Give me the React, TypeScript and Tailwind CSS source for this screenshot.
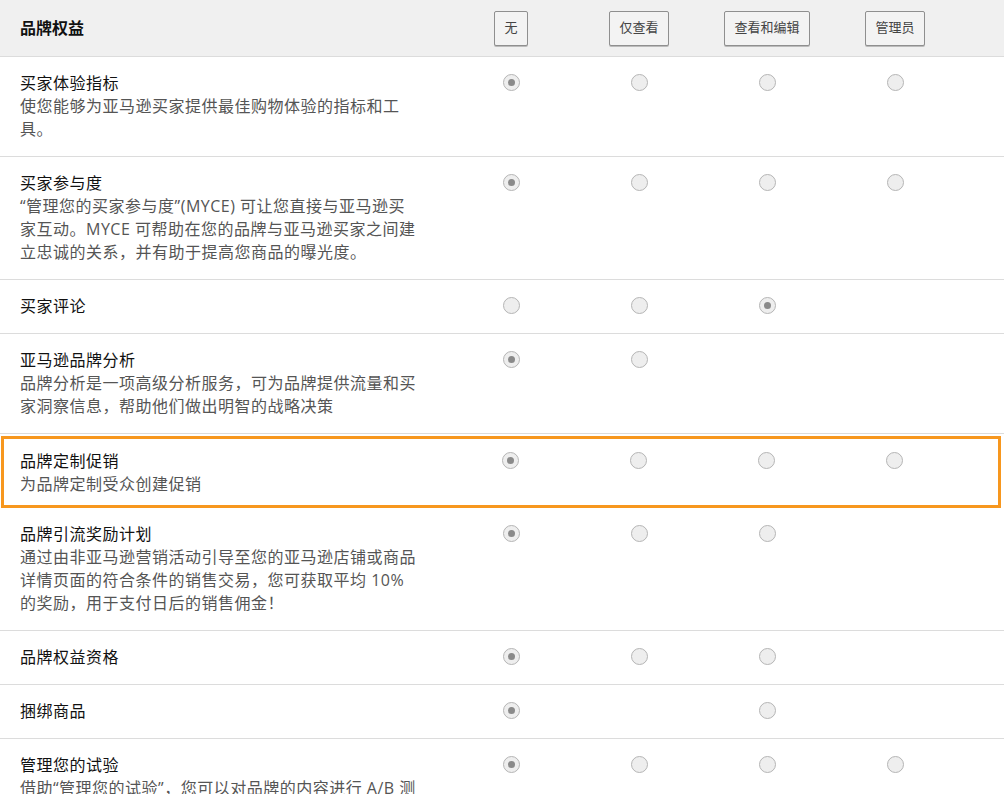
const font = { fontFamily: '"Open Sans", "Noto Sans CJK SC", sans-serif' };

type Row = { title: string; desc?: string; radios: (0 | 1 | null)[]; highlight?: boolean };

const rows: Row[] = [
  { title: "买家体验指标", desc: "使您能够为亚马逊买家提供最佳购物体验的指标和工具。", radios: [1, 0, 0, 0] },
  { title: "买家参与度", desc: "“管理您的买家参与度”(MYCE) 可让您直接与亚马逊买家互动。MYCE 可帮助在您的品牌与亚马逊买家之间建立忠诚的关系，并有助于提高您商品的曝光度。", radios: [1, 0, 0, 0] },
  { title: "买家评论", radios: [0, 0, 1, null] },
  { title: "亚马逊品牌分析", desc: "品牌分析是一项高级分析服务，可为品牌提供流量和买家洞察信息，帮助他们做出明智的战略决策", radios: [1, 0, null, null] },
  { title: "品牌定制促销", desc: "为品牌定制受众创建促销", radios: [1, 0, 0, 0], highlight: true },
  { title: "品牌引流奖励计划", desc: "通过由非亚马逊营销活动引导至您的亚马逊店铺或商品详情页面的符合条件的销售交易，您可获取平均 10% 的奖励，用于支付日后的销售佣金！", radios: [1, 0, 0, null] },
  { title: "品牌权益资格", radios: [1, 0, 0, null] },
  { title: "捆绑商品", radios: [1, null, 0, null] },
  { title: "管理您的试验", desc: "借助“管理您的试验”，您可以对品牌的内容进行 A/B 测试（也称为“拆分测试”）。通过试验，您可以将两个版本的内容进行对比，以便查看哪个版本的内容效果更佳。", radios: [1, 0, 0, 0] },
];

function Radio({ v }: { v: 0 | 1 | null }) {
  if (v === null) return <div className="w-[128px]" />;
  return (
    <div className="flex w-[128px] justify-center pt-[2px]">
      <div className="flex h-[17px] w-[17px] items-center justify-center rounded-full border border-[#b5b5b5] bg-[#eeeeee]">
        {v === 1 && <div className="h-[7px] w-[7px] rounded-full bg-[#8a8a8a]" />}
      </div>
    </div>
  );
}

export default function App() {
  const heads = ["无", "仅查看", "查看和编辑", "管理员"];
  return (
    <div className="h-[794px] w-[1004px] overflow-hidden bg-white text-[#111]" style={font}>
      <div className="flex h-[57px] items-center border-b border-[#dcdcdc] bg-[#f0f0f0]">
        <div className="w-[447px] pl-5 text-[16px] font-bold">品牌权益</div>
        {heads.map((h) => (
          <div key={h} className="flex w-[128px] justify-center">
            <div className="flex h-[35px] items-center rounded-[2px] border border-[#8f8f8f] bg-[#f3f3f3] px-[9px] text-[13px] text-[#444] shadow-[0_1px_0_#bbb]">
              {h}
            </div>
          </div>
        ))}
      </div>
      {rows.map((r) => (
        <div
          key={r.title}
          className={
            r.highlight
              ? "mx-[1px] mt-[2px] flex w-[1000px] border-[3px] border-[#f7971e] pb-[9px] pt-[11px]"
              : "flex border-b border-[#dcdcdc] pb-[15px] pt-[15px]"
          }
        >
          <div className={r.highlight ? "w-[443px] pl-[16px]" : "w-[447px] pl-5"}>
            <div className="w-[400px] text-[16px] leading-[23px] tracking-[0.5px] text-[#111]">{r.title}</div>
            {r.desc && <div className="w-[400px] text-[16px] leading-[23px] tracking-[0.5px] text-[#555]">{r.desc}</div>}
          </div>
          <div className={r.highlight ? "-ml-[1px] flex" : "flex"}>
            {r.radios.map((v, i) => (
              <Radio key={i} v={v} />
            ))}
          </div>
        </div>
      ))}
    </div>
  );
}
